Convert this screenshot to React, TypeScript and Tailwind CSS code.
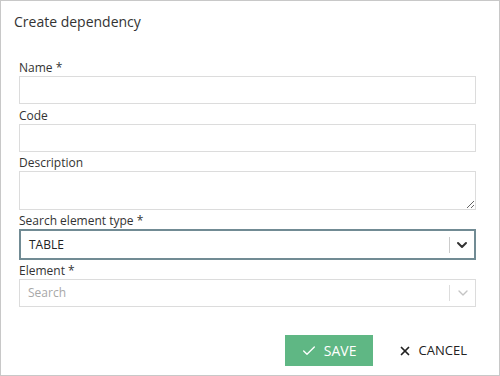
import { Check, ChevronDown, X } from 'lucide-react';

const font = { fontFamily: '"Open Sans", "Liberation Sans", sans-serif' };

function Label({ text }: { text: string }) {
  return <div className="h-[17px] text-[12px] leading-[17px] text-[#333]">{text}</div>;
}

function Select({ value, placeholder, active }: { value?: string; placeholder?: string; active?: boolean }) {
  return (
    <div
      className={`flex items-center bg-white ${
        active ? 'h-[31px] border-2 border-[#718b94]' : 'h-[28px] border border-[#dcdcdc]'
      }`}
    >
      <div className={`flex-1 pl-[8px] text-[12px] ${value ? 'text-[#222]' : 'text-[#a8a8a8]'}`}>
        {value || placeholder}
      </div>
      <div className={`h-[16px] w-px ${active ? 'bg-[#cccccc]' : 'bg-[#dddddd]'}`} />
      <div className={`flex justify-center ${active ? 'w-[24px]' : 'w-[25px]'}`}>
        <ChevronDown
          className="h-[16px] w-[16px]"
          strokeWidth={active ? 3 : 2}
          color={active ? '#333333' : '#c4c4c4'}
        />
      </div>
    </div>
  );
}

export default function App() {
  return (
    <div className="flex h-[376px] w-[500px] flex-col border border-[#c8c8c8] bg-white" style={font}>
      {/* Header */}
      <div className="px-[13px] pt-[11px] text-[14px] leading-[20px] text-[#333]">Create dependency</div>

      {/* Form */}
      <div className="mt-[27px] flex flex-col gap-[2px] pr-[23px] pl-[18px]">
        <div className="mb-[1px]">
          <Label text="Name *" />
          <input className="block h-[28px] w-full border border-[#dcdcdc] outline-none" />
        </div>
        <div>
          <Label text="Code" />
          <input className="block h-[28px] w-full border border-[#dcdcdc] outline-none" />
        </div>
        <div>
          <Label text="Description" />
          <textarea className="block h-[39px] w-full border border-[#dcdcdc] outline-none" />
        </div>
        <div>
          <Label text="Search element type *" />
          <Select value="TABLE" active />
        </div>
        <div>
          <Label text="Element *" />
          <Select placeholder="Search" />
        </div>
      </div>

      {/* Actions */}
      <div className="mt-[28px] flex items-center justify-end gap-[25px] pr-[32px]">
        <button className="flex h-[31px] w-[88px] items-center justify-center gap-[7px] bg-[#5fb784] text-[14px] font-medium text-white">
          <Check className="h-[16px] w-[16px]" strokeWidth={2} />
          SAVE
        </button>
        <button className="flex items-center gap-[7px] text-[13px] font-medium text-[#222]">
          <X className="h-[14px] w-[14px]" strokeWidth={3} />
          CANCEL
        </button>
      </div>
    </div>
  );
}
